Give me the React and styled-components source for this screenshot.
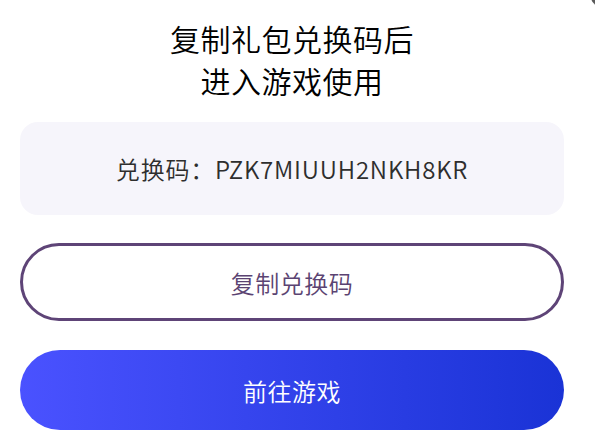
import React from "react";
import styled, { createGlobalStyle } from "styled-components";

const GlobalStyle = createGlobalStyle`
  body {
    margin: 0;
    background: #ffffff;
    font-family: "Noto Sans CJK SC", "Noto Sans", sans-serif;
  }
`;

const Page = styled.div`
  position: relative;
  width: 595px;
  height: 440px;
  box-sizing: border-box;
  padding: 17px 31px 0 20px;
  overflow: hidden;
  display: flex;
  flex-direction: column;
  letter-spacing: 0.5px;
`;

const CloseDot = styled.div`
  position: absolute;
  top: -12px;
  right: -14px;
  width: 18px;
  height: 18px;
  border-radius: 50%;
  background: #5a5a5a;
`;

const Title = styled.h1`
  margin: 0;
  font-size: 30px;
  font-weight: 350;
  line-height: 42px;
  color: #000000;
  text-align: center;
`;

const CodeBox = styled.div`
  margin-top: 21px;
  height: 93px;
  border-radius: 18px;
  background: #f6f5fb;
  display: flex;
  align-items: center;
  justify-content: center;
  font-size: 24px;
  font-weight: 350;
  letter-spacing: 0.8px;
  color: #2e2e2e;
`;

const Button = styled.button`
  box-sizing: border-box;
  width: 100%;
  height: ${(p) => (p.$primary ? "80px" : "78px")};
  margin-top: ${(p) => (p.$primary ? "29px" : "28px")};
  border-radius: 40px;
  font-family: inherit;
  font-size: 24px;
  font-weight: 350;
  letter-spacing: 0.5px;
  display: flex;
  align-items: center;
  justify-content: center;
  cursor: pointer;
  border: ${(p) => (p.$primary ? "none" : "3px solid #5e4477")};
  color: ${(p) => (p.$primary ? "#ffffff" : "#5b4372")};
  background: ${(p) =>
    p.$primary ? "linear-gradient(90deg, #4a52ff 0%, #1a33d6 100%)" : "#ffffff"};
`;

export default function App() {
  return (
    <>
      <GlobalStyle />
      <Page>
        <CloseDot />
        <Title>
          复制礼包兑换码后
          <br />
          进入游戏使用
        </Title>
        <CodeBox>兑换码：PZK7MIUUH2NKH8KR</CodeBox>
        <Button>复制兑换码</Button>
        <Button $primary>前往游戏</Button>
      </Page>
    </>
  );
}
